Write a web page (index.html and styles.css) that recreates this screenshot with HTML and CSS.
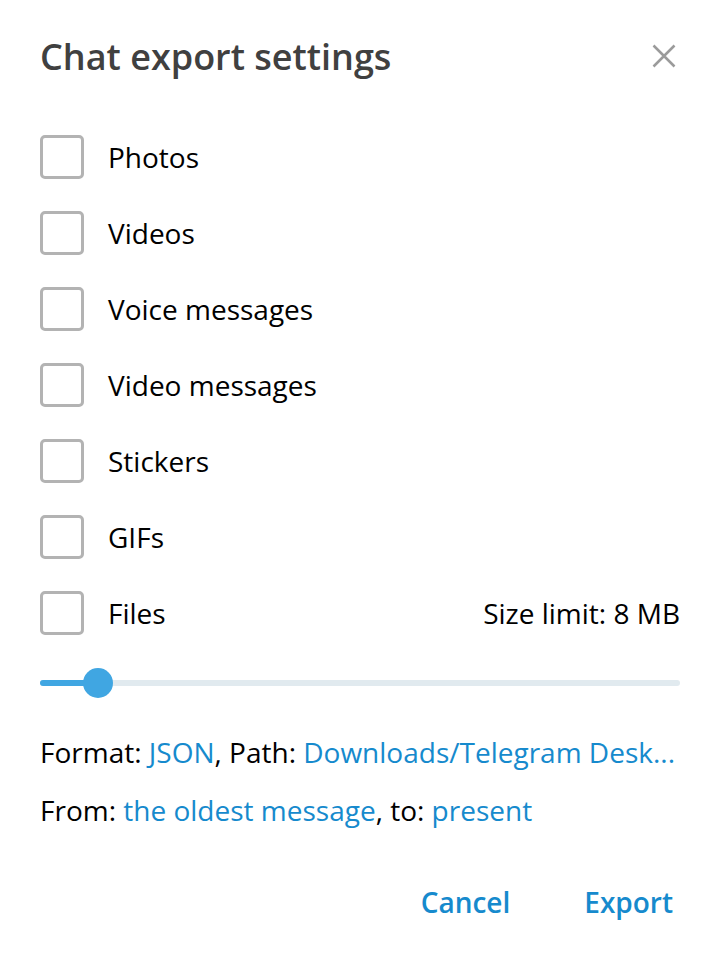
FILE: index.html
```html
<!DOCTYPE html>
<html>
<head>
<meta charset="utf-8">
<link rel="stylesheet" href="styles.css">
</head>
<body>
<div class="dialog">
  <div class="header">
    <h1 class="title">Chat export settings</h1>
    <button class="close" aria-label="Close">
      <svg width="24" height="24" viewBox="0 0 24 24"><path d="M1.5 1.5L22.5 22.5M22.5 1.5L1.5 22.5" stroke="#9b9b9b" stroke-width="2.5" fill="none"/></svg>
    </button>
  </div>
  <div class="options">
    <div class="row"><span class="box"></span><span class="label">Photos</span></div>
    <div class="row"><span class="box"></span><span class="label">Videos</span></div>
    <div class="row"><span class="box"></span><span class="label">Voice messages</span></div>
    <div class="row"><span class="box"></span><span class="label">Video messages</span></div>
    <div class="row"><span class="box"></span><span class="label">Stickers</span></div>
    <div class="row"><span class="box"></span><span class="label">GIFs</span></div>
    <div class="row"><span class="box"></span><span class="label">Files</span><span class="limit">Size limit: 8 MB</span></div>
  </div>
  <div class="slider">
    <div class="track"><div class="fill" style="width:58px"></div><div class="knob" style="left:58px"></div></div>
  </div>
  <p class="info">Format: <a>JSON</a>, Path: <a>Downloads/Telegram Desk...</a></p>
  <p class="info">From: <a>the oldest message</a>, to: <a>present</a></p>
  <div class="buttons">
    <button class="btn">Cancel</button>
    <button class="btn">Export</button>
  </div>
</div>
</body>
</html>
```
FILE: styles.css
```css
html, body { margin: 0; padding: 0; background: #fff; }
body { font-family: "Open Sans", "Noto Sans", sans-serif; color: #000; }
.dialog { width: 720px; height: 954px; box-sizing: border-box; padding: 0 40px 0 40px; }
.header { display: flex; justify-content: space-between; align-items: center; height: 112px; padding-bottom: 7px; }
.title { margin: 0; font-size: 36px; font-weight: 600; color: #404040; }
.close { border: 0; background: none; padding: 0; margin-right: 4px; width: 24px; height: 24px; display: flex; }
.options { display: flex; flex-direction: column; }
.row { height: 76px; display: flex; align-items: center; }
.box { width: 38px; height: 38px; border: 3px solid #b3b3b3; border-radius: 5px; flex: none; }
.label { margin-left: 24px; font-size: 28px; flex: 1; }
.limit { font-size: 28px; }
.slider { height: 62px; display: flex; align-items: center; padding-top: 1px; }
.track { position: relative; width: 100%; height: 6px; background: #e1eaef; border-radius: 3px; }
.fill { position: absolute; left: 0; top: 0; height: 100%; background: #40a6e2; border-radius: 3px; }
.knob { position: absolute; top: 50%; width: 30px; height: 30px; margin: -15px 0 0 -15px; background: #40a6e2; border-radius: 50%; }
.info { margin: 0; font-size: 28px; height: 58px; line-height: 58px; }
.info:first-of-type { margin-top: 9px; }
.info a { color: #168acd; }
.buttons { display: flex; justify-content: flex-end; gap: 74px; margin-top: 44px; padding-right: 7px; }
.btn { border: 0; background: none; padding: 0; font-family: inherit; font-size: 28px; font-weight: 600; color: #168acd; }
```
